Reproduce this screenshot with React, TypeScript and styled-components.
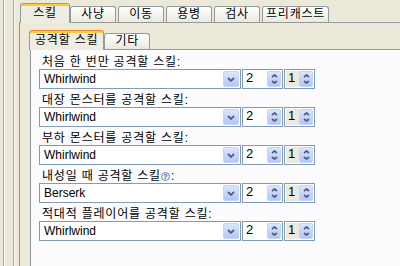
import React from "react";
import styled, { createGlobalStyle, css } from "styled-components";

const GlobalStyle = createGlobalStyle`
  html, body { margin: 0; padding: 0; background: #ECE9D8; }
  body {
    font-family: "Liberation Sans", "Noto Sans CJK KR", sans-serif;
    font-size: 12px;
    color: #000;
  }
  * { box-sizing: border-box; }
`;

const Page = styled.div`
  width: 400px;
  height: 266px;
  overflow: hidden;
  display: flex;
  background: #ECE9D8;
  padding-left: 3px;
`;

const Rail = styled.div<{ $pad: number }>`
  flex: 1;
  display: flex;
  min-width: 0;
  border-left: 1px solid #ACA899;
  box-shadow: inset 1px 0 0 #FFFFFF;
  padding-left: ${(p) => p.$pad}px;
`;

const TabControl = styled.div`
  flex: 1;
  min-width: 0;
  display: flex;
  flex-direction: column;
`;

const TabStrip = styled.div<{ $top: number; $left: number }>`
  display: flex;
  align-items: flex-end;
  gap: 2px;
  padding-top: ${(p) => p.$top}px;
  padding-left: ${(p) => p.$left}px;
  position: relative;
  z-index: 1;
`;

const Tab = styled.div<{ $active?: boolean }>`
  height: 16px;
  min-width: 46px;
  padding: 0 3px;
  border: 1px solid #919B9C;
  border-bottom: none;
  border-radius: 3px 3px 0 0;
  background: linear-gradient(#FFFFFF, #F3F2EC 60%, #EAE8DE);
  line-height: 15px;
  letter-spacing: 0.8px;
  text-align: center;
  white-space: nowrap;
  ${(p) =>
    p.$active &&
    css`
      height: 20px;
      min-width: 50px;
      padding: 0 5px;
      margin: 0 -2px -1px;
      border-top-color: #E68B2C;
      box-shadow: inset 0 2px 0 #FFC83C;
      background: #EFEDE2;
      line-height: 18px;
    `}
`;

const TabPanel = styled.div<{ $bg: string; $padTop: number; $padLeft: number }>`
  flex: 1;
  display: flex;
  flex-direction: column;
  border-top: 1px solid #919B9C;
  border-left: 1px solid #919B9C;
  background: ${(p) => p.$bg};
  padding-top: ${(p) => p.$padTop}px;
  padding-left: ${(p) => p.$padLeft}px;
`;

const Form = styled.div`
  display: flex;
  flex-direction: column;
  gap: 4px;
`;

const Field = styled.div`
  display: flex;
  flex-direction: column;
`;

const Label = styled.div`
  height: 14px;
  line-height: 14px;
  padding-left: 3px;
  display: flex;
  align-items: center;
  white-space: nowrap;
  letter-spacing: 0.8px;
`;

const Help = styled.span`
  display: inline-flex;
  align-items: center;
  justify-content: center;
  width: 9px;
  height: 9px;
  margin: 0 1px 0 0;
  border-radius: 50%;
  border: 1px solid #6C86C0;
  background: #EEF2FB;
  color: #3B5A9D;
  font-size: 7px;
  font-weight: bold;
  line-height: 7px;
  letter-spacing: 0;
`;

const Controls = styled.div`
  display: flex;
  gap: 1px;
  height: 20px;
`;

const Combo = styled.div`
  width: 202px;
  height: 100%;
  border: 1px solid #7F9DB9;
  background: #FFFFFF;
  display: flex;
  align-items: stretch;
  padding: 1px;
`;

const ComboText = styled.div`
  flex: 1;
  padding-left: 3px;
  line-height: 16px;
`;

const BlueButton = styled.div<{ $w: number }>`
  width: ${(p) => p.$w}px;
  border: 1px solid #C3D3FD;
  border-radius: 2px;
  background: linear-gradient(#DCE6FE, #C6D6FB 50%, #B4C7F4);
  display: flex;
  flex-direction: column;
  align-items: center;
  justify-content: center;
  gap: 2px;
`;

const Spin = styled.div<{ $w: number }>`
  width: ${(p) => p.$w}px;
  height: 100%;
  border: 1px solid #7F9DB9;
  background: #FFFFFF;
  display: flex;
  padding: 1px;
`;

const SpinValue = styled.div<{ $disabled?: boolean }>`
  flex: 1;
  padding-left: 2px;
  font-size: 13px;
  line-height: 13px;
  background: ${(p) => (p.$disabled ? "#EEEADB" : "#FFFFFF")};
`;

const Chevron = ({ dir, w, h }: { dir: "up" | "down"; w: number; h: number }) => (
  <svg width={w} height={h} viewBox={`0 0 ${w} ${h}`}>
    <polyline
      points={
        dir === "down"
          ? `1,1 ${w / 2},${h - 1} ${w - 1},1`
          : `1,${h - 1} ${w / 2},1 ${w - 1},${h - 1}`
      }
      fill="none"
      stroke="#4D6185"
      strokeWidth={1.8}
    />
  </svg>
);

const DropButton = () => (
  <BlueButton $w={16}>
    <Chevron dir="down" w={8} h={5} />
  </BlueButton>
);

const SpinButton = () => (
  <BlueButton $w={14}>
    <Chevron dir="up" w={7} h={4} />
    <Chevron dir="down" w={7} h={4} />
  </BlueButton>
);

type Row = { label: string; value: string; help?: boolean };

const rows: Row[] = [
  { label: "처음 한 번만 공격할 스킬", value: "Whirlwind" },
  { label: "대장 몬스터를 공격할 스킬", value: "Whirlwind" },
  { label: "부하 몬스터를 공격할 스킬", value: "Whirlwind" },
  { label: "내성일 때 공격할 스킬", value: "Berserk", help: true },
  { label: "적대적 플레이어를 공격할 스킬", value: "Whirlwind" },
];

const outerTabs = ["스킬", "사냥", "이동", "용병", "검사", "프리캐스트"];
const innerTabs = ["공격할 스킬", "기타"];

export default function App() {
  return (
    <>
      <GlobalStyle />
      <Page>
        <Rail $pad={9}>
          <Rail $pad={5}>
            <TabControl>
              <TabStrip $top={3} $left={3}>
                {outerTabs.map((t, i) => (
                  <Tab key={t} $active={i === 0}>
                    {t}
                  </Tab>
                ))}
              </TabStrip>
              <TabPanel $bg="#ECE9D8" $padTop={7} $padLeft={10}>
                <TabControl>
                  <TabStrip $top={0} $left={1}>
                    {innerTabs.map((t, i) => (
                      <Tab key={t} $active={i === 0}>
                        {t}
                      </Tab>
                    ))}
                  </TabStrip>
                  <TabPanel $bg="#FCFCFE" $padTop={5} $padLeft={8}>
                    <Form>
                      {rows.map((r, i) => (
                        <Field key={i}>
                          <Label>
                            {r.label}
                            {r.help && <Help>?</Help>}:
                          </Label>
                          <Controls>
                            <Combo>
                              <ComboText>{r.value}</ComboText>
                              <DropButton />
                            </Combo>
                            <Spin $w={41}>
                              <SpinValue>2</SpinValue>
                              <SpinButton />
                            </Spin>
                            <Spin $w={31}>
                              <SpinValue $disabled>1</SpinValue>
                              <SpinButton />
                            </Spin>
                          </Controls>
                        </Field>
                      ))}
                    </Form>
                  </TabPanel>
                </TabControl>
              </TabPanel>
            </TabControl>
          </Rail>
        </Rail>
      </Page>
    </>
  );
}
